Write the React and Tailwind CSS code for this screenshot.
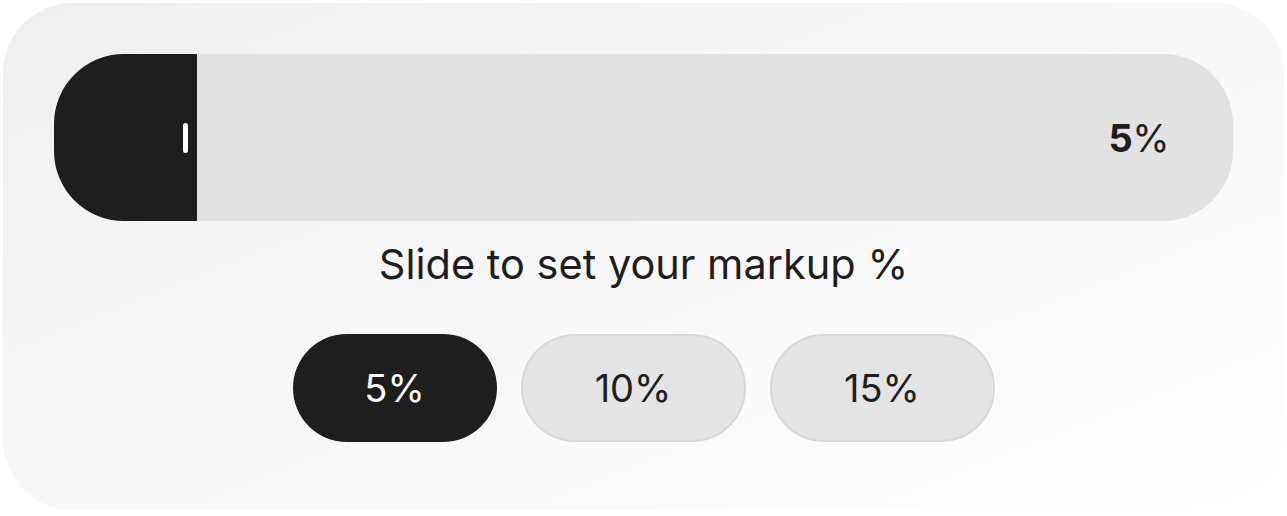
export default function App() {
  return (
    <div className="w-[1287px] h-[516px] bg-white p-[3px]" style={{ fontFamily: "Inter, 'Noto Sans', sans-serif" }}>
      <div className="w-full h-[507px] rounded-[70px] bg-gradient-to-br from-[#efefef] via-[#f8f8f8] to-white pt-[51px] px-[51px] flex flex-col items-center">
        <div className="w-full h-[167px] rounded-[70px] bg-[#e2e2e2] overflow-hidden flex items-center">
          <div className="w-[143px] h-full bg-[#1e1e1e] flex items-center justify-end pr-[9px] shrink-0">
            <div className="w-[5px] h-[30px] rounded-full bg-white" />
          </div>
          <div className="flex-1" />
          <div className="pr-[64px] text-[38px] leading-none text-[#1e1e1e] tracking-[-0.5px]">
            <span className="font-bold">5</span>
            <span>%</span>
          </div>
        </div>
        <div className="mt-[18px] text-[41.5px] leading-[50px] text-[#1e1e1e]">Slide to set your markup %</div>
        <div className="mt-[45px] flex gap-[24px]">
          <button className="w-[204px] h-[108px] rounded-full bg-[#1e1e1e] text-white text-[38px] flex items-center justify-center">5%</button>
          <button className="w-[225px] h-[108px] rounded-full bg-[#e4e4e5] border-2 border-[#d9d9d9] text-[#1e1e1e] text-[38px] flex items-center justify-center">10%</button>
          <button className="w-[225px] h-[108px] rounded-full bg-[#e4e4e5] border-2 border-[#d9d9d9] text-[#1e1e1e] text-[38px] flex items-center justify-center">15%</button>
        </div>
      </div>
    </div>
  );
}
